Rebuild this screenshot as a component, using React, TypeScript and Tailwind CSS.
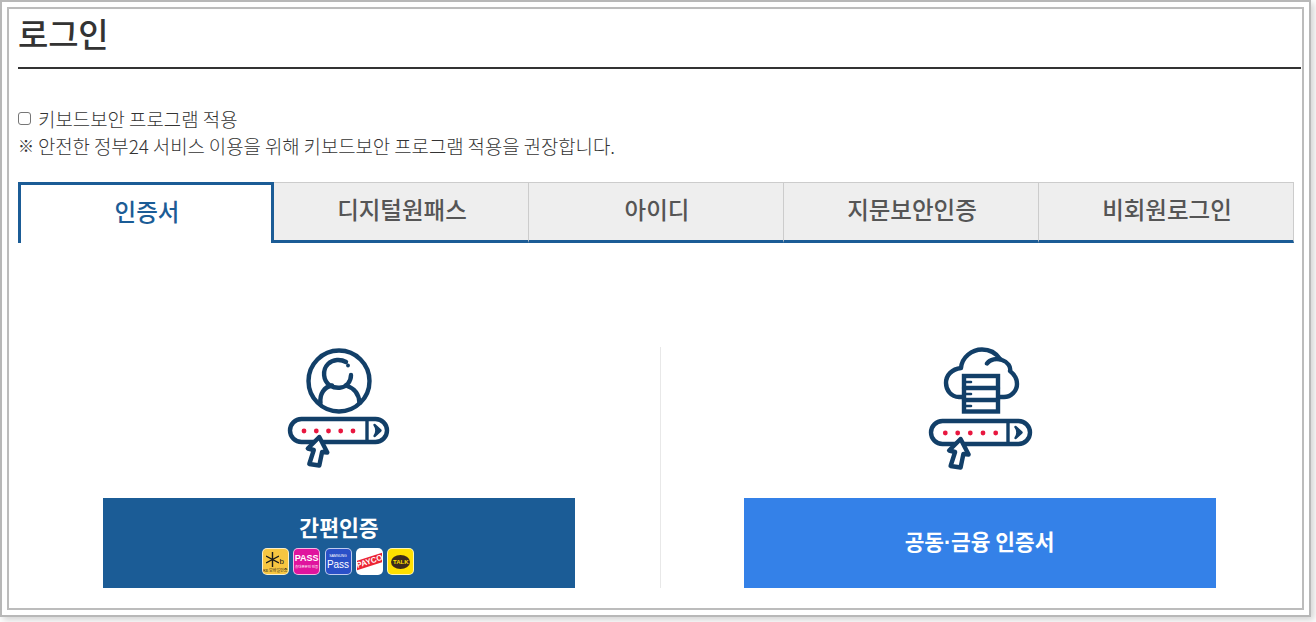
const NAVY = "#123f68";

function Bar({ x, y, w, div, dots }: { x: number; y: number; w: number; div: number; dots: number[] }) {
  const t = dots[0] + 15.3;
  const u = y + 18;
  return (
    <g fill="none" stroke={NAVY} strokeWidth="4.4" strokeLinecap="round" strokeLinejoin="round">
      <rect x={x} y={y} width={w} height={23} rx="11.5" />
      <path d={`M${div} ${y} V${y + 23}`} strokeLinecap="butt" strokeWidth="3.4" />
      <path
        d={`M${div + 7.5} ${y + 6} L${div + 13.5} ${y + 11.5} L${div + 7.5} ${y + 17} C${div + 10} ${y + 14} ${div + 10} ${y + 9} ${div + 7.5} ${y + 6} Z`}
        fill={NAVY}
        strokeWidth="2.4"
      />
      {dots.map((d) => (
        <circle key={d} cx={d} cy={y + 12} r="2.4" fill="#e8173f" stroke="none" />
      ))}
      <path
        d={`M${t} ${u} L${t - 11.5} ${u + 11.5} L${t - 5.5} ${u + 13} L${t - 10} ${u + 27} L${t} ${u + 28.5} L${t + 2.8} ${u + 15} L${t + 8} ${u + 15.5} Z`}
        fill="#fff"
      />
    </g>
  );
}

function UserIcon() {
  return (
    <svg width="110" height="125" viewBox="283 345 110 125" className="block">
      <g fill="none" stroke={NAVY} strokeWidth="4.4" strokeLinecap="round">
        <circle cx="338" cy="381" r="30.5" />
        <path d="M345 362 C340 359 332 359 327 364 C321 370 322 381 329 385.5 C335 389 343 388.5 347 383.5 C349 381 350 378 350 375" />
        <circle cx="347" cy="365.5" r="1.9" fill={NAVY} stroke="none" />
        <path d="M319.5 403 C318.5 394 323 387 331 385.5 M345 385.5 C353 388 358 394 358.5 403" />
      </g>
      <Bar x={289} y={419} w={97} div={366} dots={[303, 315.3, 327.5, 339.7, 352]} />
    </svg>
  );
}

function CloudIcon() {
  return (
    <svg width="110" height="125" viewBox="925 345 110 125" className="block">
      <g fill="none" stroke={NAVY} strokeWidth="4.4" strokeLinecap="round" strokeLinejoin="round">
        <path d="M962 397 H959 C951 397 946 390 946 383 C946 375 952 369 961 368 C962 357 972 349.5 982 349.5 C990 349.5 996 353 1000 359" />
        <path d="M987 363.5 C990 359 997 358 1002 360 C1008 362 1011 367 1010 371 C1014 374 1017 379 1017 384 C1017 391 1011 397 1004 397 H1000" />
        <rect x="964" y="376" width="34" height="35.5" strokeLinejoin="miter" />
        <path d="M964 388 H998 M964 400 H998" />
        <path d="M964 382 H971 M964 394 H971 M964 406 H971" strokeWidth="2.6" />
      </g>
      <Bar x={931} y={421} w={99} div={1008} dots={[945.3, 957.7, 970.3, 983, 995.7]} />
    </svg>
  );
}

function Logos() {
  const box = "w-[27px] h-[27px] rounded-[5px] border border-white/70 overflow-hidden flex flex-col items-center justify-center";
  return (
    <div className="flex gap-[4.4px] mt-[7px] -ml-[2px] font-['Liberation_Sans',sans-serif]">
      <div className={`${box} bg-[#f7c641] text-[#1a1a1a]`}>
        <div className="flex items-end h-[17px]">
          <svg width="13" height="15" viewBox="0 0 13 15" className="block">
            <path d="M6.5 0 V15 M0 4 L13 11 M0 11 L13 4" stroke="#1a1a1a" strokeWidth="1.4" fill="none" />
          </svg>
          <span className="text-[8px] leading-[10px]">b</span>
        </div>
        <span className="text-[4px] leading-[6px] font-['Noto_Sans_CJK_KR',sans-serif] whitespace-nowrap">KB 모바일인증</span>
      </div>
      <div className={`${box} bg-[#e0149e] text-white`}>
        <span className="text-[9px] font-bold leading-[11px]">PASS</span>
        <span className="text-[3.5px] leading-[6px] font-['Noto_Sans_CJK_KR',sans-serif] whitespace-nowrap">휴대폰본인 인증</span>
      </div>
      <div className={`${box} bg-[#2a50c8] text-white`}>
        <span className="text-[3.5px] leading-[5px] whitespace-nowrap">SAMSUNG</span>
        <span className="text-[10px] leading-[11px]">Pass</span>
      </div>
      <div className={`${box} bg-white`}>
        <span className="bg-[#ec2434] text-white text-[8px] font-bold leading-[9px] px-[3px] -rotate-[18deg] whitespace-nowrap">PAYCO</span>
      </div>
      <div className={`${box} bg-[#ffe000]`}>
        <span className="w-[19px] h-[14px] rounded-[50%] bg-[#3c2a1c] text-[#ffe000] text-[6px] font-bold leading-[14px] text-center">TALK</span>
      </div>
    </div>
  );
}

const tabs = ["디지털원패스", "아이디", "지문보안인증", "비회원로그인"];

export default function App() {
  return (
    <div className="w-[1316px] h-[622px] bg-white font-['Noto_Sans_CJK_KR','Noto_Sans',sans-serif] text-[#333]">
      <div className="w-[1311px] h-[617px] border-2 border-[#b8b8b8] p-[5px] shadow-[3px_3px_7px_rgba(0,0,0,0.18)]">
        <div className="h-full border-2 border-[#bcbcbc] pl-[9px] pr-[1px]">
          <h1 className="h-[60px] border-b-2 border-[#333] text-[33px] font-medium leading-[48px] tracking-[-0.2px]">로그인</h1>
          <div className="mt-[36px] text-[18.9px] font-light leading-[27px] h-[54px] text-[#333] whitespace-nowrap">
            <label className="flex items-center gap-[7px] h-[27px]">
              <span className="w-[13px] h-[13px] rounded-[3px] border border-[#767676] bg-white" />
              <span>키보드보안 프로그램 적용</span>
            </label>
            <p className="flex">
              <span className="w-[20px] text-[16px]">※</span>
              <span className="tracking-[-0.07px]">안전한 정부24 서비스 이용을 위해 키보드보안 프로그램 적용을 권장합니다.</span>
            </p>
          </div>
          <div className="mt-[23px] flex w-[1276px] h-[61px]">
            <div className="w-[256px] border-[3px] border-b-0 border-[#1b5c96] text-[#1b5c96] text-[23.5px] font-medium flex items-center justify-center pb-[5px] pl-[2px]">
              인증서
            </div>
            {tabs.map((t) => (
              <div
                key={t}
                className="flex-1 bg-[#eeeeee] border-t border-r border-[#cccccc] border-b-[3px] border-b-[#1b5c96] text-[#555] text-[23.5px] font-medium flex items-center justify-center pb-[3px] pl-[2px]"
              >
                {t}
              </div>
            ))}
          </div>
          <div className="mt-[104px] flex">
            <div className="w-[642px] flex flex-col items-center">
              <div className="mt-[-2px] h-[153px]">
                <UserIcon />
              </div>
              <div className="w-[472px] h-[90px] bg-[#1b5c96] text-white flex flex-col items-center pt-[14px]">
                <span className="text-[21.6px] font-bold leading-[29px]">간편인증</span>
                <Logos />
              </div>
            </div>
            <div className="flex-1 border-l border-[#e8e8e8] flex flex-col items-center pr-[3px]">
              <div className="mt-[-2px] h-[153px]">
                <CloudIcon />
              </div>
              <div className="w-[472px] h-[90px] bg-[#3481e8] text-white text-[21.4px] font-bold flex items-center justify-center pb-[2px]">
                <span>
                  공동<span className="font-['Liberation_Sans',sans-serif]">·</span>금융 인증서
                </span>
              </div>
            </div>
          </div>
        </div>
      </div>
    </div>
  );
}
